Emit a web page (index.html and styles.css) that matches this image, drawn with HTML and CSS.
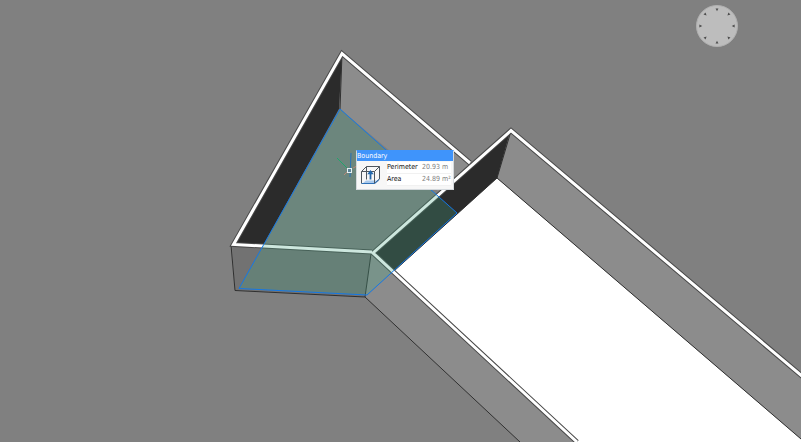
FILE: index.html
```html
<!DOCTYPE html>
<html lang="en">
	<head>
		<meta charset="utf-8">
		<title>Boundary</title>
		<link rel="stylesheet" href="styles.css">
	</head>
	<body>

		<main class="viewport">
			<svg class="scene" viewBox="0 0 801 442" preserveAspectRatio="xMinYMin slice" aria-hidden="true">
				<!-- left room -->
				<polygon class="wall" points="342,54 470,163 440,193 340,109"/>
				<polygon class="floor" points="340,109 452,208 394,270 371,254 235,244"/>
				<polygon class="wallDark" points="342,55 339,109 264,244 234,244"/>
				<polygon class="wallFront" points="232,246 371,253 365,297 235,290"/>
				<path class="edge" d="M342 54L340 109M231 245L235 290.5L365 297"/>

				<!-- right room -->
				<polygon class="floorWhite" points="497,178 801,439 801,442 576,442 392,272"/>
				<polygon class="wall" points="511,131 801,376 801,439 497,178"/>
				<polygon class="wallDark" points="510,132 497,178 394,271 374,254"/>
				<polygon class="wall" points="371,254 575,442 520,442 365,297"/>
				<path class="edge" d="M511 131L497 178L801 439M497 178L394 271M371 254L365 297L520 442"/>

				<!-- wall tops -->
				<path class="topEdge" d="M470 163L342 53.5L233.5 244.5L372 252M577 442L373 253L511 130.500L803 377"/>
				<path class="top" d="M470 163L342 53.5L233.5 244.5L372 252M577 442L373 253L511 130.500L803 377"/>

				<!-- boundary -->
				<polygon class="boundary" points="340,109 457,213 367,295 239,288.5"/>

				<!-- cursor -->
				<path class="axisX" d="M344 175L347 172M353 168L357 166"/>
				<path class="axisY" d="M337 158L347 168"/>
				<path class="axisZ" d="M351 153L350 177"/>
				<rect class="pick" x="347.5" y="168.5" width="4" height="4"/>
			</svg>

			<button class="compass" type="button" aria-label="View direction">
				<svg viewBox="-21 -21 42 42">
					<defs>
						<path id="mark" d="M-1.500 -18.500H1.500L0 -15.500Z"/>
					</defs>
					<use href="#mark"/>
					<use href="#mark" transform="rotate(45)"/>
					<use href="#mark" transform="rotate(90)"/>
					<use href="#mark" transform="rotate(135)"/>
					<use href="#mark" transform="rotate(180)"/>
					<use href="#mark" transform="rotate(225)"/>
					<use href="#mark" transform="rotate(270)"/>
					<use href="#mark" transform="rotate(315)"/>
				</svg>
			</button>

			<section class="tip">
				<h1 class="tipTitle">Boundary</h1>
				<div class="tipBody">
					<svg class="tipIcon" viewBox="0 0 20 20" aria-hidden="true">
						<path class="iconBase" d="M1 19L5 15.500H18.500L14 19Z"/>
						<path class="iconLine" d="M.5 18.500V6.500L5.500 1.500H18.500V14L13.500 18.500M.5 6.500H13.500V18.500M13.500 6.500L18.500 1.500M5.500 1.500V14.500"/>
						<path class="iconArrow" d="M9.500 5L12.800 9.300H10.400V14.500H8.600V9.300H6.200Z"/>
						<path class="iconBlue" d="M.5 18.500H13.500L18.500 14"/>
					</svg>
					<table class="tipTable">
						<tr>
							<th scope="row">Perimeter</th>
							<td>20.93 m</td>
						</tr>
						<tr>
							<th scope="row">Area</th>
							<td>24.89 m²</td>
						</tr>
					</table>
				</div>
			</section>
		</main>

	</body>
</html>
```

FILE: styles.css
```css
* {
	margin: 0;
	padding: 0;
	box-sizing: border-box;
}

body {
	font-family: "DejaVu Sans Condensed", "Noto Sans", sans-serif;
	background-color: #808080;
}

.viewport {
	position: relative;
	height: 100vh;
	overflow: hidden;
}

.scene {
	display: block;
	width: 100%;
	height: 100%;
}

.wall {
	fill: #8c8c8c;
}

.wallDark {
	fill: #2b2b2b;
}

.wallFront {
	fill: #727272;
}

.floor {
	fill: #7b7b7b;
}

.floorWhite {
	fill: #ffffff;
}

.edge {
	fill: none;
	stroke: #303030;
	stroke-width: 1;
}

.top,
.topEdge {
	fill: none;
	stroke: #ffffff;
	stroke-width: 3;
}

.topEdge {
	stroke: #484848;
	stroke-width: 5;
}

.boundary {
	fill: rgba(70, 168, 132, 0.27);
	stroke: #1478e6;
	stroke-width: 1;
}

.axisX,
.axisY,
.axisZ {
	stroke: #b98878;
	stroke-width: 1;
}

.axisY {
	stroke: #20a56c;
}

.axisZ {
	stroke: #2672b8;
}

.pick {
	fill: #5d8496;
	stroke: #e4f1f4;
}

.compass {
	position: absolute;
	top: 5px;
	right: 63px;
	width: 42px;
	height: 42px;
	border: 1px solid #b0b0b0;
	border-radius: 50%;
	background-color: #bdbdbd;
	cursor: pointer;
}

.compass svg {
	display: block;
	width: 100%;
	fill: #4c4c4c;
}

.tip {
	position: absolute;
	left: 356px;
	top: 150px;
	width: 98px;
	border: 1px solid #d4d9dd;
	border-top-color: #3f94fb;
	background-color: #f7f7f7;
	font-size: 7px;
	will-change: opacity;
}

.tipTitle {
	height: 10px;
	font-size: 7px;
	font-weight: 400;
	line-height: 11px;
	color: #ffffff;
	background-color: #3f94fb;
}

.tipBody {
	display: flex;
	align-items: flex-start;
	height: 28px;
}

.tipIcon {
	flex: none;
	width: 20px;
	height: 20px;
	margin: 4px 0 0 4px;
}

.iconBase {
	fill: #a9c9ec;
}

.iconLine,
.iconBlue {
	fill: none;
	stroke: #4e565e;
	stroke-width: 1;
}

.iconBlue {
	stroke: #2f72b8;
}

.iconArrow {
	fill: #2468ac;
}

.tipTable {
	margin: 1px 0 0 6px;
	border-collapse: collapse;
	line-height: 11px;
	white-space: nowrap;
	background-color: #ffffff;
}

.tipTable th {
	width: 35px;
	font-weight: 400;
	text-align: left;
	color: #101010;
	border-bottom: 1px solid #f1f1f1;
}

.tipTable td {
	color: #808080;
	border-bottom: 1px solid #f1f1f1;
}
```
